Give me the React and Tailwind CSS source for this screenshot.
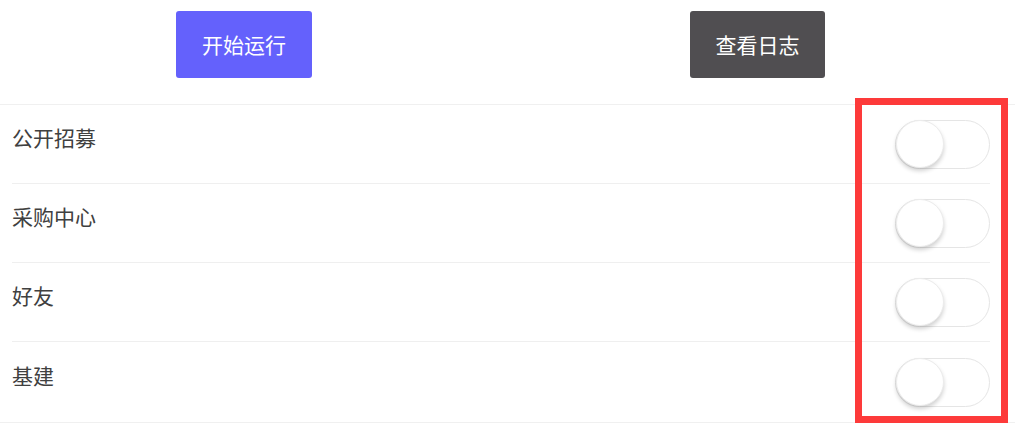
import React from "react";

const items = ["公开招募", "采购中心", "好友", "基建"];

const Toggle = () => (
  <div className="relative w-[95px] h-[49px] rounded-full border border-[#e5e5e5] bg-white">
    <div className="absolute left-0 top-[-1px] w-[48px] h-[48px] rounded-full bg-white border border-[#ececec] shadow-[0_3px_4px_rgba(0,0,0,0.18)]" />
  </div>
);

const App = () => {
  return (
    <div
      className="relative w-[1035px] h-[439px] bg-white overflow-hidden"
      style={{ fontFamily: '"Noto Sans CJK SC", "Noto Sans", sans-serif' }}
    >
      <div className="flex items-start pt-[11px] pl-[176px] gap-[378px] h-[104px]">
        <button className="w-[136px] h-[67px] rounded-[3px] bg-[#6461fc] text-white text-[21px]">
          开始运行
        </button>
        <button className="w-[135px] h-[67px] rounded-[3px] bg-[#504e51] text-white text-[21px]">
          查看日志
        </button>
      </div>

      <div className="w-[1015px] border-t border-b border-[#f0f0f0]">
        {items.map((label, i) => (
          <div key={label} className="pl-[12px] pr-[25px]">
            <div
              className={
                "flex items-center justify-between " +
                (i < items.length - 1 ? "h-[79px] border-b border-[#efefef]" : "h-[80px]")
              }
            >
              <span className="text-[21px] text-[#404040] mb-[12px]">{label}</span>
              <Toggle />
            </div>
          </div>
        ))}
      </div>

      <div className="absolute left-[855px] top-[98px] w-[153px] h-[325px] border-[7px] border-[#fd3a3a]" />
    </div>
  );
};

export default App;
